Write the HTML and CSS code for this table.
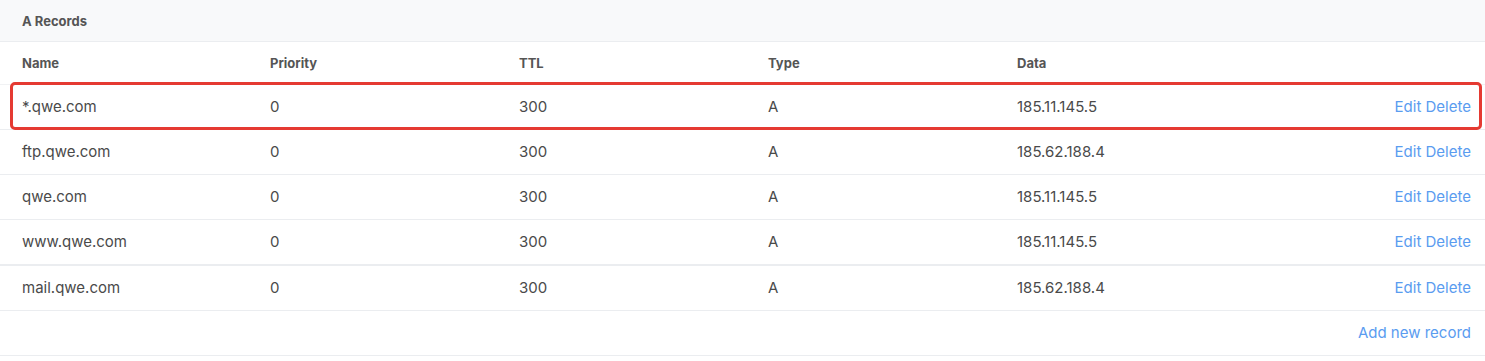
FILE: index.html
```html
<!DOCTYPE html>
<html>
<head>
<meta charset="utf-8">
<link rel="stylesheet" href="styles.css">
</head>
<body>
<div class="panel">
  <div class="panel-head">A Records</div>
  <div class="row row-head">
    <div>Name</div><div>Priority</div><div>TTL</div><div>Type</div><div>Data</div><div></div>
  </div>
  <div class="row highlighted">
    <div>*.qwe.com</div><div>0</div><div>300</div><div>A</div><div>185.11.145.5</div>
    <div class="actions"><a>Edit</a> <a>Delete</a></div>
    <span class="mark"></span>
  </div>
  <div class="row">
    <div>ftp.qwe.com</div><div>0</div><div>300</div><div>A</div><div>185.62.188.4</div>
    <div class="actions"><a>Edit</a> <a>Delete</a></div>
  </div>
  <div class="row">
    <div>qwe.com</div><div>0</div><div>300</div><div>A</div><div>185.11.145.5</div>
    <div class="actions"><a>Edit</a> <a>Delete</a></div>
  </div>
  <div class="row thick">
    <div>www.qwe.com</div><div>0</div><div>300</div><div>A</div><div>185.11.145.5</div>
    <div class="actions"><a>Edit</a> <a>Delete</a></div>
  </div>
  <div class="row">
    <div>mail.qwe.com</div><div>0</div><div>300</div><div>A</div><div>185.62.188.4</div>
    <div class="actions"><a>Edit</a> <a>Delete</a></div>
  </div>
  <div class="row add">
    <div class="actions"><a>Add new record</a></div>
  </div>
</div>
</body>
</html>
```
FILE: styles.css
```css
body {
  margin: 0;
  background: #fff;
  font-family: Inter, "Noto Sans", sans-serif;
  color: #4a4a4a;
}
.panel-head {
  height: 41px;
  background: #f8f9fa;
  border-bottom: 1px solid #ebedf0;
  display: flex;
  align-items: center;
  padding-left: 22px;
  font-size: 13px;
  font-weight: 700;
  color: #555;
}
.row {
  display: grid;
  grid-template-columns: 248px 249px 249px 249px 1fr 200px;
  align-items: center;
  height: 44px;
  padding: 0 14px 0 22px;
  border-bottom: 1px solid #ebedf0;
  font-size: 15px;
  position: relative;
}
.row > div {
  margin-top: -1px;
}
.row-head {
  height: 42px;
  font-size: 13px;
  font-weight: 700;
  color: #555;
  border-bottom-color: #f1f2f4;
}
.row-head > div {
  margin-top: 0;
}
.row.thick {
  border-bottom: 2px solid #ebedf0;
  height: 44px;
}
.row.add {
  grid-template-columns: 1fr;
}
.actions {
  text-align: right;
  color: #5a9cf0;
}
.actions a {
  color: #5a9cf0;
  cursor: pointer;
}
.mark {
  position: absolute;
  left: 10px;
  right: 3px;
  top: -3px;
  bottom: -1px;
  border: 3px solid #e53a32;
  border-radius: 5px;
  pointer-events: none;
}
```
